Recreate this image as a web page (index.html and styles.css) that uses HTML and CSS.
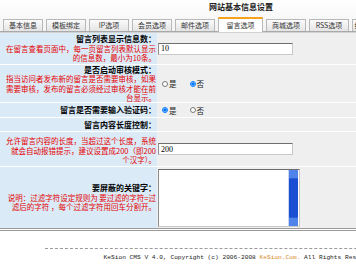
FILE: index.html
```html
<!DOCTYPE html>
<html>
<head>
	<meta charset="utf-8">
	<title>网站基本信息设置</title>
	<link rel="stylesheet" href="styles.css">
</head>
<body>
<div class="page">
	<div class="head">
		<div class="title">网站基本信息设置</div>
		<div class="tabs">
			<span class="tab">基本信息</span>
			<span class="tab">模板绑定</span>
			<span class="tab">IP选项</span>
			<span class="tab">会员选项</span>
			<span class="tab">邮件选项</span>
			<span class="tab on">留言选项</span>
			<span class="tab">商城选项</span>
			<span class="tab">RSS选项</span>
			<span class="tab">缩略图水印</span>
		</div>
	</div>

	<div class="form">
		<div class="row r1">
			<div class="lbl">
				<b>留言列表显示信息数：</b>
				<span class="note">在留言查看页面中，每一页留言列表默认显示<br>的信息数，最小为10条。</span>
			</div>
			<div class="val"><input class="txt" type="text" value="10"></div>
		</div>

		<div class="row r2">
			<div class="lbl">
				<b>是否启动审核模式：</b>
				<span class="note">指当访问者发布新的留言是否需要审核，如果<br>需要审核，发布的留言必须经过审核才能在前<br>台显示。</span>
			</div>
			<div class="val">
				<input type="radio" name="verify"><span class="opt">是</span>
				<input type="radio" name="verify" checked><span class="opt">否</span>
			</div>
		</div>

		<div class="row r3">
			<div class="lbl"><b>留言是否需要输入验证码：</b></div>
			<div class="val">
				<input type="radio" name="code" checked><span class="opt">是</span>
				<input type="radio" name="code"><span class="opt">否</span>
			</div>
		</div>

		<div class="row r4">
			<div class="lbl"><b>留言内容长度控制：</b></div>
			<div class="val"></div>
		</div>

		<div class="row r5">
			<div class="lbl">
				<span class="note">允许留言内容的长度，当超过这个长度，系统<br>就会自动报错提示，建议设置成200（即200<br>个汉字）。</span>
			</div>
			<div class="val"><input class="txt" type="text" value="200"></div>
		</div>

		<div class="row r6">
			<div class="lbl">
				<b>要屏蔽的关键字：</b>
				<span class="note">说明：过滤字符设定规则为 要过滤的字符=过<br>滤后的字符 ，每个过滤字符用回车分割开。</span>
			</div>
			<div class="val">
				<div class="area">
					<textarea></textarea>
					<div class="sb"><span class="btn"></span><span class="btn"></span></div>
				</div>
			</div>
		</div>
	</div>

	<div class="foot">
		<div class="dash"></div>
		<div class="copy">KeSion CMS V 4.0, Copyright (c) 2006-2008 <span class="brand">KeSion.Com.</span> All Rights Reserved.</div>
	</div>
</div>
</body>
</html>
```

FILE: styles.css
```css
html, body {
  margin: 0;
  padding: 0;
}
body {
  overflow: hidden;
  background: #fff;
  font-family: "Noto Sans CJK SC", "Liberation Sans", sans-serif;
}
.page {
  width: 482px;
}

/* header + tabs */
.head {
  height: 31px;
  background: linear-gradient(#fff, #f3f3f3);
  border-bottom: 1px solid #a9a9a9;
}
.title {
  height: 17px;
  line-height: 13px;
  text-align: center;
  font-size: 8px;
  font-weight: bold;
  color: #222;
}
.tabs {
  display: flex;
  align-items: flex-end;
  gap: 3px;
  height: 14px;
  padding-left: 3px;
}
.tab {
  flex: none;
  width: 40px;
  height: 12px;
  box-sizing: border-box;
  border: 1px solid #b8b8b8;
  border-bottom: 0;
  background: linear-gradient(#fbfbfb, #e4e4e4);
  font-size: 7px;
  line-height: 11px;
  text-align: center;
  color: #333;
  white-space: nowrap;
}
.tab.on {
  width: 45px;
  height: 15px;
  margin-bottom: -1px;
  border-top: 2px solid #f7a21b;
  background: #fff;
  line-height: 13px;
}

/* form rows */
.form {
  border-top: 1px solid #d2d2d2;
  border-bottom: 3px double #9a9a9a;
}
.row {
  display: flex;
  border-bottom: 1px solid #fff;
  background: #efefef;
}
.row:last-child {
  border-bottom: 0;
}
.r1 { height: 31px; }
.r2 { height: 37px; }
.r3 { height: 14px; }
.r4 { height: 13px; }
.r5 { height: 34px; }
.r6 { height: 61px; }

.lbl {
  flex: none;
  width: 157px;
  box-sizing: border-box;
  padding-right: 1px;
  background: #dbeaf7;
  display: flex;
  flex-direction: column;
  justify-content: center;
  align-items: flex-end;
  text-align: right;
}
.lbl b {
  font-size: 8px;
  line-height: 9.5px;
  color: #000;
  white-space: nowrap;
}
.note {
  font-size: 7.5px;
  line-height: 9.5px;
  color: #e30000;
  white-space: nowrap;
}
.r5 .note {
  padding-top: 3px;
}
.val {
  flex: 1;
  display: flex;
  align-items: center;
  padding-left: 1px;
}

.txt {
  width: 135px;
  height: 12px;
  box-sizing: border-box;
  margin: 0;
  padding: 0 2px;
  border: 1px solid #c8c8c8;
  border-top-color: #6d6d6d;
  border-left-color: #8e8e8e;
  background: #fff;
  font-family: "Liberation Serif", serif;
  font-size: 8px;
  color: #000;
}

input[type="radio"] {
  width: 6px;
  height: 6px;
  margin: 0 1px 0 4px;
}
.opt {
  font-size: 7.5px;
  line-height: 9px;
  color: #222;
  margin-right: 9px;
}

/* textarea with xp style scrollbar */
.area {
  display: flex;
  width: 142px;
  height: 58px;
  box-sizing: border-box;
  border: 1px solid #c8c8c8;
  border-top-color: #6d6d6d;
  border-left-color: #8e8e8e;
  background: #fff;
}
.area textarea {
  flex: 1;
  margin: 0;
  padding: 0;
  border: 0;
  resize: none;
  outline: none;
}
.sb {
  width: 9px;
  margin-right: 1px;
  background: #1a4fd4;
  display: flex;
  flex-direction: column;
  justify-content: space-between;
  border-left: 1px solid #c9d6ee;
}
.btn {
  height: 8px;
  background: #4f83ea;
  border-bottom: 1px solid #2c5ed8;
}
.btn:last-child {
  border-bottom: 0;
  border-top: 1px solid #2c5ed8;
}

/* footer */
.foot {
  padding-top: 17px;
}
.dash {
  width: 392px;
  margin: 0 auto;
  border-top: 1px dashed #9a9a9a;
}
.copy {
  margin-top: 4px;
  text-align: center;
  white-space: nowrap;
  font-family: "Liberation Mono", monospace;
  font-size: 6.2px;
  line-height: 9px;
  color: #222;
}
.brand {
  color: #d9892b;
}
```
